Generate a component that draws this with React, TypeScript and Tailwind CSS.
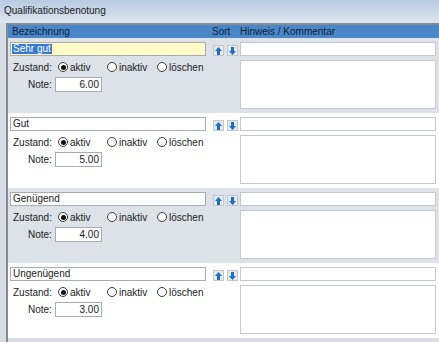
//@ts-nocheck
import React from "react";

const rows = [
  { name: "Sehr gut", note: "6.00", focused: true },
  { name: "Gut", note: "5.00" },
  { name: "Genügend", note: "4.00" },
  { name: "Ungenügend", note: "3.00" },
];

function Arrow({ down }) {
  return (
    <svg width="7" height="8" viewBox="0 0 7 8" style={{ transform: down ? "rotate(180deg)" : undefined }}>
      <path d="M3.5 0 L7 4 H5 V8 H2 V4 H0 Z" fill="#1c6fc4" />
    </svg>
  );
}

function SortButton({ down }) {
  return (
    <div className="w-[11px] h-[11px] flex items-center justify-center bg-[#e6e9ec] border border-[#c3c7cc]">
      <Arrow down={down} />
    </div>
  );
}

function Radio({ checked, label, width }) {
  return (
    <div className="flex items-center shrink-0" style={{ width }}>
      <div className="w-[10px] h-[10px] rounded-full border border-[#3a3a3a] bg-white flex items-center justify-center">
        {checked && <div className="w-[5px] h-[5px] rounded-full bg-[#111]" />}
      </div>
      <span className="ml-[2px]">{label}</span>
    </div>
  );
}

function Row({ row, index }) {
  const grey = index % 2 === 0;
  return (
    <div className={`flex h-[75px] pt-[4px] ${grey ? "bg-[#dde2e8]" : "bg-white"}`}>
      <div className="w-[202px] pl-[2px] flex flex-col">
        <div
          className={`h-[14px] w-[196px] border border-[#a9adb2] flex items-center px-[1px] leading-none ${
            row.focused ? "bg-[#fffbc6]" : "bg-white"
          }`}
        >
          <span className={row.focused ? "bg-[#3579d3] text-white px-[1px]" : "px-[1px]"}>{row.name}</span>
        </div>
        <div className="mt-[4px] h-[14px] flex items-center pl-[3px]">
          <span className="w-[45px] shrink-0">Zustand:</span>
          <Radio checked label="aktiv" width={49} />
          <Radio label="inaktiv" width={50} />
          <Radio label="löschen" width={50} />
        </div>
        <div className="mt-[3px] flex items-center pl-[18px]">
          <span className="w-[27px] shrink-0">Note:</span>
          <div className="w-[47px] h-[15px] border border-[#a9adb2] bg-white flex items-center justify-end pr-[2px] leading-none">
            {row.note}
          </div>
        </div>
      </div>
      <div className="w-[30px] flex gap-[3px] pl-[3px] pt-[3px]">
        <SortButton />
        <SortButton down />
      </div>
      <div className="w-[196px] flex flex-col">
        <div className="h-[14px] border border-[#c4c8cc] bg-white" />
        <div className="mt-[4px] h-[49px] border border-[#c4c8cc] bg-white" />
      </div>
    </div>
  );
}

export default function App() {
  return (
    <div
      className="w-[439px] h-[342px] overflow-hidden bg-[#d6dce3] text-[10px] text-[#1b1b1b]"
      style={{ fontFamily: '"Liberation Sans", Arial, sans-serif' }}
    >
      <div className="h-[23px] bg-gradient-to-b from-[#b9cbe1] via-[#cad8e8] to-[#e0e7ef] pl-[4px] pt-[3px] text-[#1a1a1a]">
        Qualifikationsbenotung
      </div>
      <div className="ml-[6px] border-l-2 border-t-2 border-[#858b93] bg-white">
        <div className="h-[13px] bg-[#4a87c8] flex items-center text-[#0d1e38] leading-none">
          <span className="w-[204px] pl-[4px]">Bezeichnung</span>
          <span className="w-[28px]">Sort</span>
          <span>Hinweis / Kommentar</span>
        </div>
        {rows.map((row, i) => (
          <Row key={row.name} row={row} index={i} />
        ))}
        <div className="h-[4px] bg-[#d6dce3]" />
      </div>
    </div>
  );
}
